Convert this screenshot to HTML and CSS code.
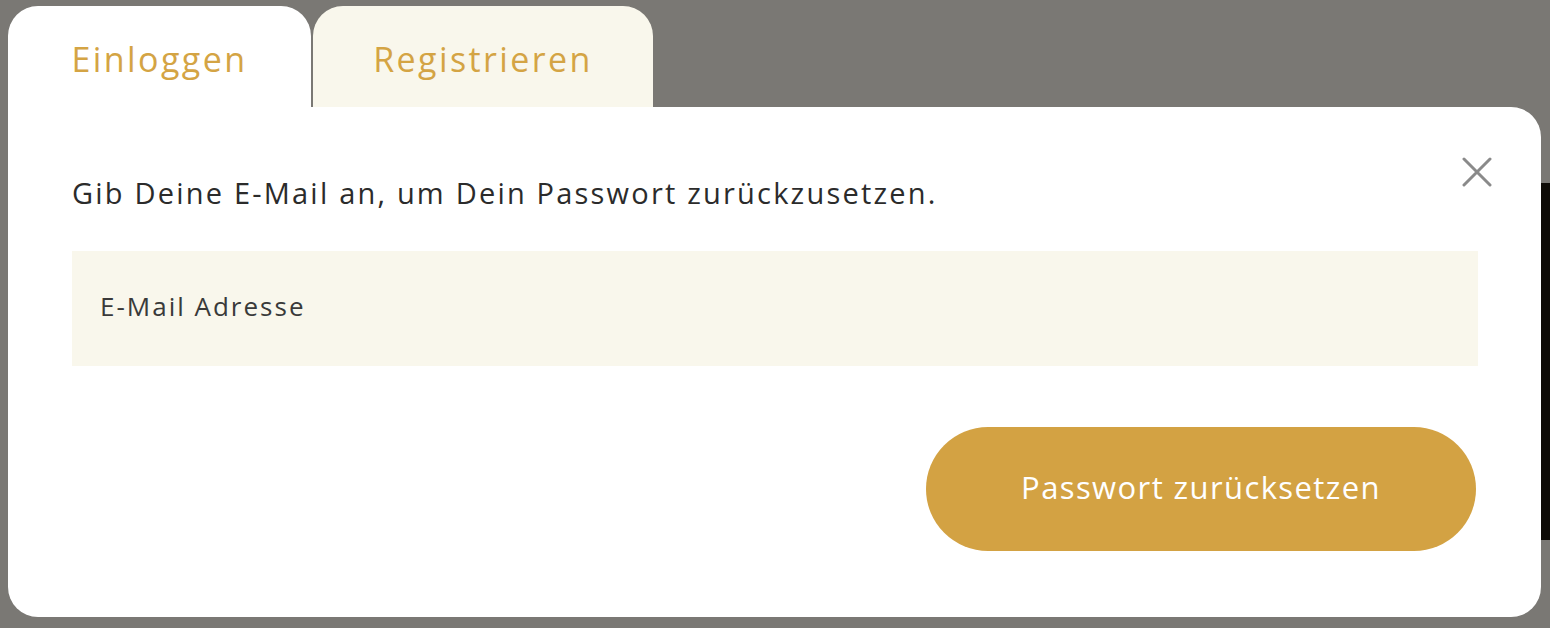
FILE: index.html
```html
<!DOCTYPE html>
<html>
<head>
    <meta charset="utf-8">
    <title>Passwort zurücksetzen</title>
    <link rel="stylesheet" href="styles.css">
</head>
<body>
    <!-- Page behind the overlay -->
    <div class="backdrop-art"></div>

    <!-- Login / Register Modal -->
    <div class="modal">
        <div class="tabs">
            <button class="tab tab-active">Einloggen</button>
            <button class="tab">Registrieren</button>
        </div>

        <div class="panel">
            <button class="close-button" aria-label="Schließen">
                <svg viewBox="0 0 30 30" width="30" height="30">
                    <path d="M2 2 L28 28 M28 2 L2 28" stroke="#8a8a8a" stroke-width="3" stroke-linecap="round" fill="none"/>
                </svg>
            </button>

            <p class="intro">Gib Deine E-Mail an, um Dein Passwort zurückzusetzen.</p>

            <form class="reset-form">
                <input type="email" class="field" placeholder="E-Mail Adresse">
                <div class="actions">
                    <button type="submit" class="submit-button">Passwort zurücksetzen</button>
                </div>
            </form>
        </div>
    </div>
</body>
</html>
```

FILE: styles.css
```css
body {
    font-family: "Open Sans", "Noto Sans", sans-serif;
    margin: 0;
    height: 628px;
    overflow: hidden;
    background-color: #7a7874;
}

/* Dark picture peeking out on the right */
.backdrop-art {
    position: absolute;
    top: 183px;
    right: 0;
    width: 20px;
    height: 357px;
    background-color: #0e0b06;
    z-index: -1;
}

/* Modal */
.modal {
    width: 1533px;
    margin: 6px 0 0 8px;
}

.tabs {
    display: flex;
    gap: 2px;
}

.tab {
    height: 101px;
    border: none;
    border-radius: 30px 30px 0 0;
    background-color: #f9f7ec;
    color: #d4a444;
    font-family: inherit;
    font-size: 34px;
    letter-spacing: 2.4px;
    padding: 4px 0 0 0;
    cursor: pointer;
    width: 340px;
}

.tab-active {
    width: 303px;
    background-color: #fff;
}

.panel {
    position: relative;
    height: 510px;
    box-sizing: border-box;
    padding: 66px 63px 0 64px;
    background-color: #fff;
    border-radius: 0 30px 30px 30px;
}

.close-button {
    position: absolute;
    top: 50px;
    right: 49px;
    width: 30px;
    height: 30px;
    padding: 0;
    border: none;
    background: none;
    cursor: pointer;
}

.close-button svg {
    display: block;
}

.intro {
    margin: 0 0 38px 0;
    font-size: 29px;
    letter-spacing: 2.2px;
    line-height: 40px;
    color: #2b2b2b;
}

/* Form */
.field {
    display: block;
    width: 100%;
    height: 115px;
    box-sizing: border-box;
    padding: 0 28px 6px 28px;
    border: none;
    background-color: #f9f7ec;
    font-family: inherit;
    font-size: 26px;
    font-weight: 500;
    letter-spacing: 2px;
    outline: none;
}

.field::placeholder {
    color: #3a3a3a;
}

.actions {
    display: flex;
    justify-content: flex-end;
    margin-top: 61px;
    padding-right: 2px;
}

.submit-button {
    width: 550px;
    height: 124px;
    border: none;
    border-radius: 62px;
    background-color: #d3a243;
    color: #fff;
    font-family: inherit;
    font-size: 31px;
    font-weight: 500;
    letter-spacing: 1.4px;
    padding: 0 0 4px 0;
    cursor: pointer;
}
```
